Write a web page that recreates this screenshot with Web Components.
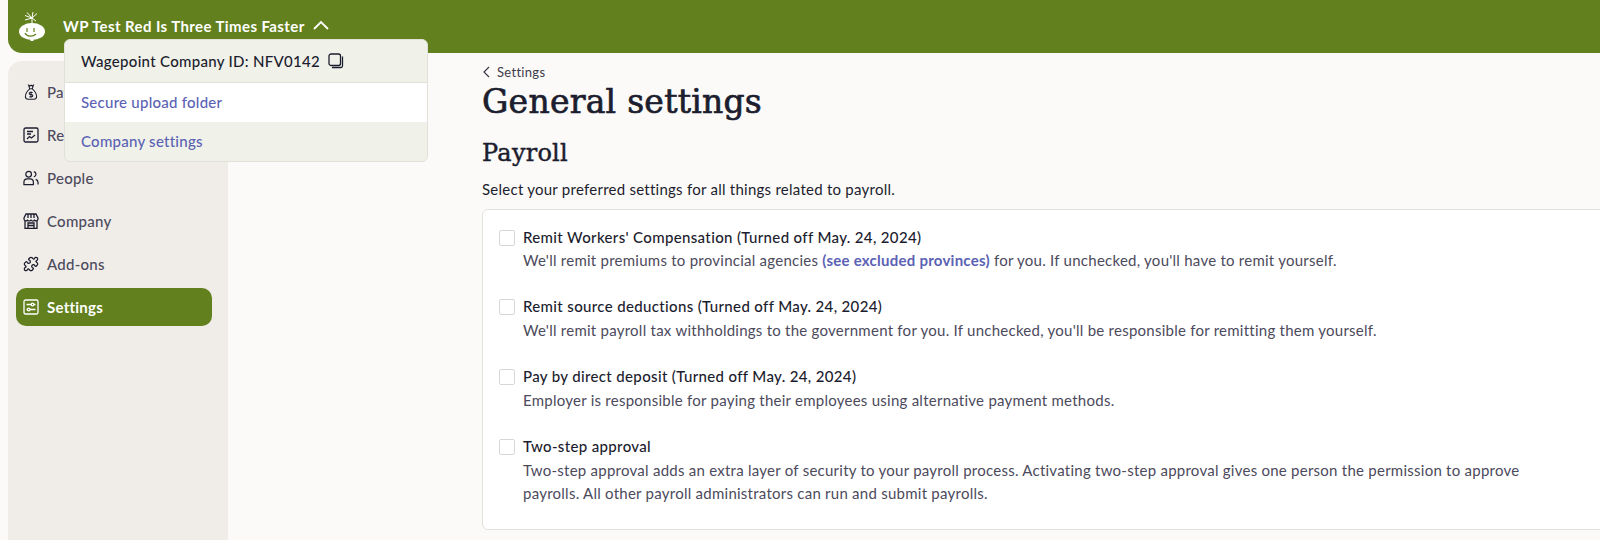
<!DOCTYPE html>
<html>
<head>
<meta charset="utf-8">
<style>
  html, body { margin: 0; height: 100%; overflow: hidden; background: #fbfaf8; }
  body { font-family: "Lato", "Noto Sans", sans-serif; letter-spacing: .25px; }
</style>
</head>
<body>
<template id="nav-icons">
  <svg data-name="payroll" viewBox="0 0 16 20"><path d="M5 1.500l1.600 1 1.400-1 1.400 1 1.600-1-1.400 4.500H6.400zM6.400 6C3.500 8.500 1 12 1 15.500 1 17.500 2.500 19 4.500 19h7c2 0 3.500-1.500 3.500-3.500C15 12 12.500 8.500 9.600 6"/><path d="M10 10.500H7.200a1.300 1.300 0 0 0 0 2.700h1.600a1.300 1.300 0 0 1 0 2.700H6M8 9.300v8"/></svg>
  <svg data-name="reports" viewBox="0 0 16 16"><rect x="1" y="1" width="14" height="14" rx="1.500"/><path d="M4 4.500h6M4 7h4M4 12l2.500-2.500 2 1.500L12 8"/></svg>
  <svg data-name="people" viewBox="0 0 17 16"><circle cx="6" cy="4" r="3"/><path d="M1 15v-2.500C1 10.500 2.500 9 4.500 9h3c2 0 3.500 1.500 3.500 3.500V15zM11.500 1.200c1.500.3 2.300 1.500 2.300 2.800s-.8 2.500-2.300 2.800M13.500 9.500c1.500.5 2.500 1.700 2.500 3.200V15"/></svg>
  <svg data-name="company" viewBox="0 0 16 16"><path d="M3 1h10l2 4v1a2 2 0 0 1-3.500 1.200A2.200 2.200 0 0 1 8 7.200a2.200 2.200 0 0 1-3.500 0A2 2 0 0 1 1 6V5zM2 8v7.500h12V8M5 15.500V10h6v5.500M5 12.500h6M5 5V1.500M11 5V1.500M8 5V1.500"/></svg>
  <svg data-name="addons" viewBox="0 0 24 24" style="stroke-width:1.900"><path d="M19.439 7.850c-.049.322.059.648.289.878l1.568 1.568c.47.47.706 1.087.706 1.704s-.235 1.233-.706 1.704l-1.611 1.611a.98.98 0 0 1-.837.276c-.47-.07-.802-.48-.968-.925a2.501 2.501 0 1 0-3.214 3.214c.446.166.855.497.925.968a.979.979 0 0 1-.276.837l-1.610 1.610a2.404 2.404 0 0 1-1.705.707 2.402 2.402 0 0 1-1.704-.706l-1.568-1.568a1.026 1.026 0 0 0-.877-.29c-.493.074-.84.504-1.020.968a2.500 2.500 0 1 1-3.237-3.237c.464-.18.894-.527.967-1.020a1.026 1.026 0 0 0-.289-.877l-1.568-1.568A2.402 2.402 0 0 1 1.998 12c0-.617.236-1.234.706-1.704L4.230 8.770c.24-.24.581-.353.917-.303.515.077.877.528 1.073 1.010a2.500 2.500 0 1 0 3.259-3.259c-.482-.196-.933-.558-1.010-1.073-.05-.336.062-.676.303-.917l1.525-1.525A2.402 2.402 0 0 1 12 1.998c.617 0 1.234.236 1.704.706l1.568 1.568c.23.23.556.338.877.29.493-.074.84-.504 1.020-.968a2.500 2.500 0 1 1 3.237 3.237c-.464.18-.894.527-.967 1.020Z"/></svg>
  <svg data-name="settings" viewBox="0 0 16 16"><rect x="1" y="1" width="14" height="14" rx="1.500"/><path d="M3.500 5.500h5M11 5.500h1.500M7 10.500h5.500M3.500 10.500h1"/><circle cx="9.500" cy="5.500" r="1.300"/><circle cx="5.700" cy="10.500" r="1.300"/></svg>
</template>

<app-header name="WP Test Red Is Three Times Faster"></app-header>
<app-shell>
  <side-nav slot="nav">
    <nav-item icon="payroll">Payroll</nav-item>
    <nav-item icon="reports">Reports</nav-item>
    <nav-item icon="people">People</nav-item>
    <nav-item icon="company">Company</nav-item>
    <nav-item icon="addons">Add-ons</nav-item>
    <nav-item icon="settings" active>Settings</nav-item>
  </side-nav>
  <settings-page>
    <setting-row title="Remit Workers' Compensation (Turned off May. 24, 2024)">We'll remit premiums to provincial agencies <a>(see excluded provinces)</a> for you. If unchecked, you'll have to remit yourself.</setting-row>
    <setting-row title="Remit source deductions (Turned off May. 24, 2024)">We'll remit payroll tax withholdings to the government for you. If unchecked, you'll be responsible for remitting them yourself.</setting-row>
    <setting-row title="Pay by direct deposit (Turned off May. 24, 2024)">Employer is responsible for paying their employees using alternative payment methods.</setting-row>
    <setting-row title="Two-step approval">Two-step approval adds an extra layer of security to your payroll process. Activating two-step approval gives one person the permission to approve payrolls. All other payroll administrators can run and submit payrolls.</setting-row>
  </settings-page>
</app-shell>
<company-menu></company-menu>

<script>
const font = '"Lato", "Noto Sans", sans-serif';
const headingFont = '"DejaVu Serif", "Liberation Serif", serif';

class AppHeader extends HTMLElement {
    connectedCallback() {
        this.attachShadow({ mode: 'open' });
        this.shadowRoot.innerHTML = `
            <style>
                :host { display: flex; align-items: center; height: 53px; margin-left: 8px; padding-left: 11px;
                    background: #62801d; border-bottom-left-radius: 14px; color: #fff; box-sizing: border-box; }
                .logo { width: 26px; height: 30px; flex: none; margin-top: -1px; }
                .name { margin-left: 18px; font: 700 15px ${font}; letter-spacing: .4px; margin-top: -1px; }
                .chev { width: 16px; height: 10px; margin-left: 8px; margin-top: -4px; fill: none; stroke: #fff; stroke-width: 1.800; }
            </style>
            <svg class="logo" viewBox="0 0 26 30">
                <path d="M13 14V7M13 7L6 4.500M13 7L8 1.500M13 7l1-6M13 7l5-4.500M13 7l-7 2M13 7l4 3" stroke="#fff" stroke-width="1" fill="none"/>
                <ellipse cx="13" cy="20.500" rx="13" ry="8.500" fill="#fff"/>
                <rect x="11.500" y="28" width="3" height="2" fill="#fff"/>
                <path d="M8 17v4M15 17v4M6 22c2 4 8 4 11 1" stroke="#62801d" stroke-width="1.200" fill="none"/>
            </svg>
            <span class="name">${this.getAttribute('name')}</span>
            <svg class="chev" viewBox="0 0 16 10"><path d="M1 9l7-7 7 7"/></svg>`;
    }
}

class AppShell extends HTMLElement {
    connectedCallback() {
        this.attachShadow({ mode: 'open' });
        this.shadowRoot.innerHTML = `
            <style>
                :host { display: flex; height: 487px; margin-left: 8px; padding-top: 8px; box-sizing: border-box; }
            </style>
            <slot name="nav"></slot>
            <slot></slot>`;
    }
}

class SideNav extends HTMLElement {
    connectedCallback() {
        this.attachShadow({ mode: 'open' });
        this.shadowRoot.innerHTML = `
            <style>
                :host { display: flex; flex-direction: column; gap: 5px; width: 220px; height: 100%; flex: none;
                    box-sizing: border-box; padding: 12px 16px 0 8px; background: #f0ede9; border-top-left-radius: 14px; }
            </style>
            <slot></slot>`;
    }
}

class NavItem extends HTMLElement {
    connectedCallback() {
        const icon = document.getElementById('nav-icons').content
            .querySelector(`[data-name="${this.getAttribute('icon')}"]`).cloneNode(true);
        this.attachShadow({ mode: 'open' });
        this.shadowRoot.innerHTML = `
            <style>
                :host { display: flex; align-items: center; gap: 8px; height: 38px; padding-left: 7px; border-radius: 10px;
                    font: 500 15px ${font}; letter-spacing: .25px; color: #4c4a5c; }
                :host([active]) { background: #62801d; color: #fff; font-weight: 700; }
                svg { width: 16px; height: 16px; flex: none; fill: none; stroke: #1c1d2e; stroke-width: 1.300; }
                :host([active]) svg { stroke: #fff; }
            </style>
            <slot></slot>`;
        this.shadowRoot.prepend(icon);
    }
}

class CompanyMenu extends HTMLElement {
    connectedCallback() {
        this.attachShadow({ mode: 'open' });
        this.shadowRoot.innerHTML = `
            <style>
                :host { position: absolute; left: 64px; top: 39px; width: 364px; display: block; box-sizing: border-box;
                    border: 1px solid #e1e1da; border-radius: 6px; background: #f0f2e9; overflow: hidden;
                    font: 500 15px ${font}; letter-spacing: .25px; }
                div { display: flex; align-items: center; box-sizing: border-box; height: 39px; padding-left: 16px; }
                .id { height: 43px; padding-bottom: 1px; color: #1c1d2e; gap: 8px; border-bottom: 1px solid #e1e1da; letter-spacing: .3px; }
                .link { color: #5b62b4; padding-bottom: 2px; }
                .white { background: #fff; }
                svg { width: 16px; height: 16px; fill: none; stroke: #1c1d2e; stroke-width: 1.300; }
            </style>
            <div class="id">Wagepoint Company ID: NFV0142
                <svg viewBox="0 0 16 16"><rect x="1" y="1" width="11.500" height="11.500" rx="2"/><path d="M14.500 3.500V13a1.500 1.500 0 0 1-1.500 1.500H4"/></svg>
            </div>
            <div class="link white">Secure upload folder</div>
            <div class="link">Company settings</div>`;
    }
}

class SettingsPage extends HTMLElement {
    connectedCallback() {
        this.attachShadow({ mode: 'open' });
        this.shadowRoot.innerHTML = `
            <style>
                :host { display: block; flex: 1; min-width: 0; padding: 4px 0 0 254px; color: #1c1d2e; }
                .crumb { display: flex; align-items: center; gap: 7px; font: 400 13px/14px ${font}; letter-spacing: .3px; color: #3b3a4a; height: 14px; }
                .crumb svg { width: 8px; height: 12px; fill: none; stroke: #3b3a4a; stroke-width: 1.200; }
                h1 { margin: 0; font: 400 33px/46px ${headingFont}; -webkit-text-stroke: .7px #1c1d2e; }
                h2 { margin: 12px 0 0; font: 400 24px/32px ${headingFont}; -webkit-text-stroke: .45px #1c1d2e; }
                p { margin: 11px 0 0; font: 400 15px/18px ${font}; letter-spacing: .25px; }
                .card { margin-top: 11px; margin-right: -40px; height: 321px; box-sizing: border-box; padding: 15.500px 16px; background: #fff;
                    border: 1px solid #e3e1de; border-radius: 6px; display: flex; flex-direction: column; gap: 23.330px; }
            </style>
            <div class="crumb"><svg viewBox="0 0 8 12"><path d="M7 1L2 6l5 5"/></svg>Settings</div>
            <h1>General settings</h1>
            <h2>Payroll</h2>
            <p>Select your preferred settings for all things related to payroll.</p>
            <div class="card"><slot></slot></div>`;
    }
}

class SettingRow extends HTMLElement {
    connectedCallback() {
        this.attachShadow({ mode: 'open' });
        this.shadowRoot.innerHTML = `
            <style>
                :host { display: grid; grid-template-columns: 16px 1fr; column-gap: 8px; font-size: 15px; letter-spacing: .25px; line-height: 23.330px; }
                .box { width: 16px; height: 16px; margin-top: 4px; box-sizing: border-box; border: 1px solid #d9d7d4; border-radius: 2px; background: #fff; }
                .title { font-weight: 500; color: #1c1d2e; letter-spacing: .35px; }
                .desc { grid-column: 2; color: #4c4a5c; max-width: 1040px; }
                ::slotted(a) { color: #5b62b4; font-weight: 700; }
            </style>
            <span class="box"></span>
            <div class="title">${this.getAttribute('title')}</div>
            <div class="desc"><slot></slot></div>`;
    }
}

customElements.define('app-header', AppHeader);
customElements.define('app-shell', AppShell);
customElements.define('side-nav', SideNav);
customElements.define('nav-item', NavItem);
customElements.define('company-menu', CompanyMenu);
customElements.define('settings-page', SettingsPage);
customElements.define('setting-row', SettingRow);
</script>
</body>
</html>
